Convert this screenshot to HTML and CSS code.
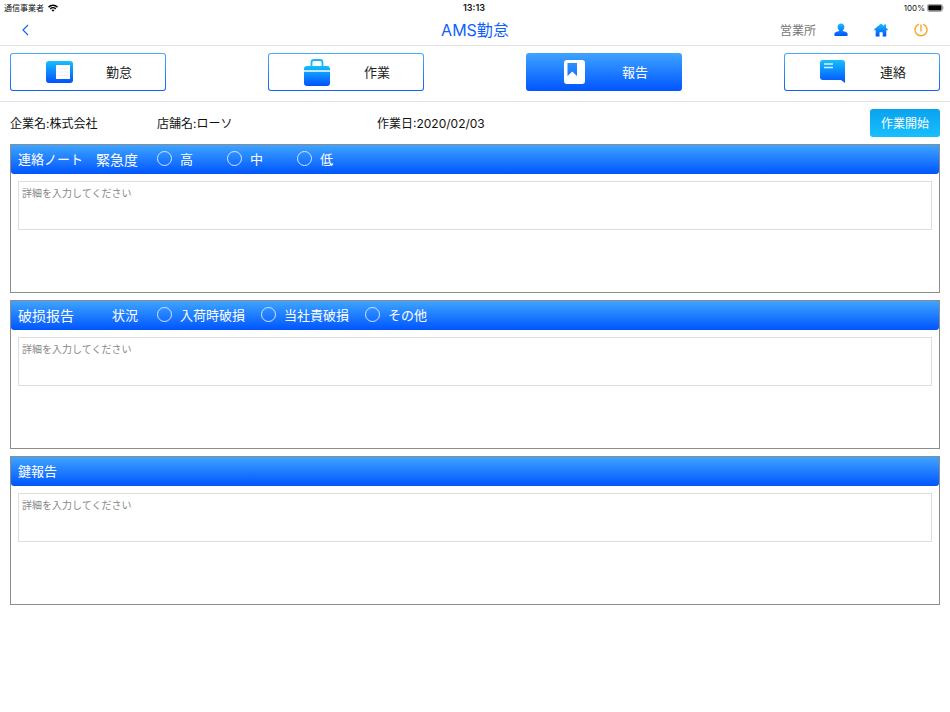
FILE: index.html
```html
<!DOCTYPE html>
<html lang="ja">
<head>
  <meta charset="UTF-8" />
  <meta name="viewport" content="width=device-width, initial-scale=1" />
  <title>AMS勤怠</title>
  <link rel="stylesheet" href="styles.css">
</head>
<body>

  <!-- shared gradient for the icons -->
  <svg class="defs" width="0" height="0" aria-hidden="true">
    <defs>
      <linearGradient id="blue" x1="0" y1="0" x2="0" y2="1">
        <stop offset="0" stop-color="#15bffd" />
        <stop offset="1" stop-color="#0450ff" />
      </linearGradient>
    </defs>
  </svg>

  <div class="status_bar">
    <div class="carrier">
      <span>通信事業者</span>
      <svg width="10" height="8" viewBox="0 0 20 15" aria-hidden="true">
        <path d="M0 4.6a14.4 14.4 0 0 1 20 0l-2.1 2.2a11.4 11.4 0 0 0-15.8 0z" />
        <path d="M3.5 8.2a9.4 9.4 0 0 1 13 0l-2.1 2.1a6.4 6.4 0 0 0-8.8 0z" />
        <path d="M7 11.7a4.4 4.4 0 0 1 6 0l-3 3.1z" />
      </svg>
    </div>
    <div class="time">13:13</div>
    <div class="battery">
      <span>100%</span>
      <svg width="17" height="8" viewBox="0 0 17 8" aria-hidden="true">
        <rect x="0.4" y="0.4" width="15" height="7" rx="1.8" fill="none" stroke="#777" stroke-width="0.7" />
        <rect x="1.3" y="1.3" width="13.2" height="5.2" rx="1" />
        <path d="M16.1 2.8q1 1.2 0 2.4z" fill="#777" />
      </svg>
    </div>
  </div>

  <header class="header">
    <a href="#" class="back" aria-label="戻る">
      <svg width="8" height="12" viewBox="0 0 8 12" aria-hidden="true">
        <path d="M6 1L1 6l5 5" fill="none" stroke="#1463ff" stroke-width="1.2" />
      </svg>
    </a>
    <h1>AMS勤怠</h1>
    <div class="header_right">
      <span class="office">営業所</span>
      <a href="#" aria-label="ユーザー">
        <svg width="14" height="14" viewBox="0 0 14 14" aria-hidden="true">
          <path fill="url(#blue)" d="M7 .6c2 0 3.400 1.500 3.400 3.500 0 1.500-.7 2.700-1.700 3.400.3.700 1.100.9 2.100 1.100 2 .5 2.900 1.500 2.900 3 0 1-.6 1.500-1.500 1.500H1.800c-.9 0-1.500-.5-1.500-1.500 0-1.500.9-2.500 2.900-3 1-.2 1.800-.4 2.100-1.100-1-.7-1.700-1.900-1.700-3.400C3.600 2.100 5 .6 7 .6z" />
        </svg>
      </a>
      <a href="#" aria-label="ホーム">
        <svg width="14" height="14" viewBox="0 0 14 14" aria-hidden="true">
          <path fill="url(#blue)" d="M7 .6l3 2.500V1.500h2v3.300l2 1.700-.8 1-.9-.5v6.400H8.700V9.300H5.500v4.100H1.700V7l-.9.500-.8-1z" />
        </svg>
      </a>
      <a href="#" aria-label="ログアウト">
        <svg width="14" height="14" viewBox="0 0 14 14" aria-hidden="true">
          <g fill="none" stroke="#f9a52b" stroke-width="1.4" stroke-linecap="round">
            <path d="M4.400 1.400a6 6 0 1 0 5.200 0" />
            <path d="M7 2v6" />
          </g>
        </svg>
      </a>
    </div>
  </header>

  <nav class="tabs">
    <button type="button" class="tab">
      <svg width="28" height="28" viewBox="0 0 28 28" aria-hidden="true">
        <rect x="1" y="3" width="27" height="22" rx="3" fill="url(#blue)" />
        <path d="M11 7h14v14H11z" fill="#fff" />
        <path d="M13 10.5h10M13 14h10M13 17.5h10" stroke="#e4eefb" stroke-width="0.8" />
      </svg>
      <span>勤怠</span>
    </button>
    <button type="button" class="tab">
      <svg width="28" height="28" viewBox="0 0 28 28" aria-hidden="true">
        <path d="M8.500 9V4.500A2.500 2.500 0 0 1 11 2h6a2.500 2.500 0 0 1 2.500 2.500V9" fill="none" stroke="#16b8f8" stroke-width="1.8" />
        <path d="M4 8h20a3 3 0 0 1 3 3v14a3 3 0 0 1-3 3H4a3 3 0 0 1-3-3V11a3 3 0 0 1 3-3z" fill="url(#blue)" />
        <path d="M1 12h26v2H1z" fill="#bcebff" />
      </svg>
      <span>作業</span>
    </button>
    <button type="button" class="tab active">
      <svg width="28" height="28" viewBox="0 0 28 28" aria-hidden="true">
        <path fill="#fff" fill-rule="evenodd" d="M6 2h15a3 3 0 0 1 3 3v18a3 3 0 0 1-3 3H6a3 3 0 0 1-3-3V5a3 3 0 0 1 3-3zM6.500 5v13l4.800-4.500 4.700 4.500V5z" />
      </svg>
      <span>報告</span>
    </button>
    <button type="button" class="tab">
      <svg width="28" height="28" viewBox="0 0 28 28" aria-hidden="true">
        <path fill="url(#blue)" d="M4 2h19a3 3 0 0 1 3 3v20l-4-3H4a3 3 0 0 1-3-3V5a3 3 0 0 1 3-3z" />
        <path d="M5 6h9M5 9.500h9" stroke="#d5f4ff" stroke-width="1.4" />
      </svg>
      <span>連絡</span>
    </button>
  </nav>

  <main>
    <div class="info">
      <span class="company">企業名:株式会社</span>
      <span class="shop">店舗名:ローソ</span>
      <span class="date">作業日:2020/02/03</span>
      <button type="button" class="start">作業開始</button>
    </div>

    <section class="card">
      <div class="card_header">
        <h2>連絡ノート</h2>
        <div class="options wide" role="radiogroup" aria-labelledby="urgency">
          <span class="group_name large" id="urgency">緊急度</span>
          <label><input type="radio" name="urgency" value="high">高</label>
          <label><input type="radio" name="urgency" value="middle">中</label>
          <label><input type="radio" name="urgency" value="low">低</label>
        </div>
      </div>
      <textarea aria-label="連絡ノート" placeholder="詳細を入力してください"></textarea>
    </section>

    <section class="card">
      <div class="card_header">
        <h2 class="large">破损报告</h2>
        <div class="options" role="radiogroup" aria-labelledby="situation">
          <span class="group_name" id="situation">状況</span>
          <label><input type="radio" name="situation" value="arrival">入荷時破損</label>
          <label><input type="radio" name="situation" value="company">当社責破損</label>
          <label><input type="radio" name="situation" value="other">その他</label>
        </div>
      </div>
      <textarea aria-label="破损报告" placeholder="詳細を入力してください"></textarea>
    </section>

    <section class="card">
      <div class="card_header">
        <h2>鍵報告</h2>
      </div>
      <textarea aria-label="鍵報告" placeholder="詳細を入力してください"></textarea>
    </section>
  </main>

</body>
</html>
```
FILE: styles.css
```css
* {
  box-sizing: border-box;
}

body {
  margin: 0;
  background: white;
  color: #111;
  font-family: Inter, "Noto Sans CJK JP", sans-serif;
  font-size: 13px;
}

button, input, textarea {
  font: inherit;
}

svg {
  display: block;
}

.defs {
  position: absolute;
}

.status_bar {
  display: grid;
  grid-template-columns: 1fr auto 1fr;
  align-items: center;
  height: 15px;
  padding: 0 6px 0 4px;
  font-size: 8px;
}

.carrier, .battery {
  display: flex;
  align-items: center;
  gap: 4px;
}

.battery {
  justify-content: flex-end;
  gap: 2px;
}

.time {
  font-size: 9px;
  font-weight: 600;
}

.header {
  display: grid;
  grid-template-columns: 1fr auto 1fr;
  align-items: center;
  height: 31px;
  padding: 0 22px;
  border-bottom: 1px solid #e3e3e3;
}

.header h1 {
  margin: 0;
  color: #0f5fff;
  font-size: 16px;
  font-weight: 400;
  line-height: 30px;
}

.back {
  justify-self: start;
}

.header_right {
  display: flex;
  justify-content: flex-end;
  align-items: center;
  gap: 26px;
}

.office {
  margin-right: -8px;
  padding-bottom: 2px;
  color: #777;
  font-size: 12px;
}

.tabs {
  display: flex;
  justify-content: space-between;
  padding: 7px 10px 10px;
  border-bottom: 1px solid #e3e3e3;
}

.tab {
  display: flex;
  align-items: center;
  gap: 33px;
  width: 156px;
  height: 38px;
  padding: 0 0 0 34px;
  border: 1px solid transparent;
  border-radius: 3px;
  background: linear-gradient(white, white) padding-box, linear-gradient(#4cabfa, #1260fb) border-box;
  color: #222;
  cursor: pointer;
}

.tab span {
  padding-bottom: 2px;
}

.tab.active {
  background: linear-gradient(#3ea4ff, #0055ff) border-box;
  color: white;
}

main {
  padding: 7px 10px;
}

.info {
  display: flex;
  align-items: center;
  margin-bottom: 7px;
  font-size: 12px;
}

.info span {
  padding-bottom: 2px;
}

.company {
  width: 147px;
}

.shop {
  width: 220px;
}

.start {
  width: 70px;
  height: 28px;
  margin-left: auto;
  padding: 0 0 2px;
  border: none;
  border-radius: 3px;
  background: linear-gradient(#0aa2ee, #18bfff);
  color: white;
  cursor: pointer;
}

.card {
  min-height: 149px;
  margin-bottom: 7px;
  border: 1px solid #8c8c8c;
}

.card_header {
  display: flex;
  align-items: center;
  height: 29px;
  padding: 0 7px 2px;
  border-radius: 0 0 3px 3px;
  background: linear-gradient(#3ea4ff, #0055ff);
  color: white;
}

.card_header h2 {
  width: 66px;
  margin: 0;
  font-size: 13px;
  font-weight: 400;
  white-space: nowrap;
}

.card_header .large {
  font-size: 14px;
}

.options {
  display: flex;
  align-items: center;
  gap: 16px;
}

.options.wide {
  gap: 34px;
}

.group_name {
  width: 54px;
  margin-right: 3px;
  text-align: right;
}

.options.wide .group_name {
  margin-right: -15px;
}

.options label {
  display: flex;
  align-items: center;
  gap: 8px;
}

input[type="radio"] {
  appearance: none;
  width: 15px;
  height: 15px;
  margin: 0;
  border: 1px solid #d5e7ff;
  border-radius: 50%;
}

input[type="radio"]:checked {
  background: white;
}

textarea {
  display: block;
  width: calc(100% - 14px);
  height: 49px;
  margin: 7px;
  padding: 4px 3px;
  border: 1px solid #dedede;
  color: #111;
  font-size: 10px;
  line-height: 15px;
  resize: none;
}

textarea::placeholder {
  color: #888;
}
```
